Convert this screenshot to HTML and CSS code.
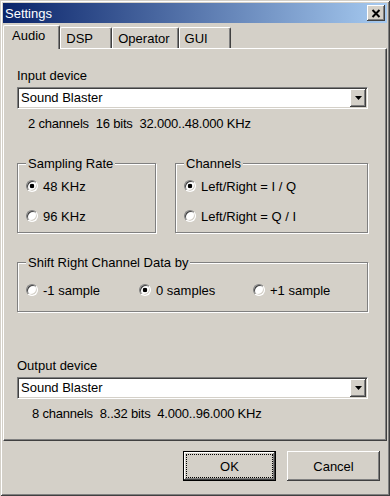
FILE: index.html
```html
<!DOCTYPE html>
<html lang="en">
<head>
  <meta charset="UTF-8">
  <meta name="viewport" content="width=device-width, initial-scale=1.0">
  <title>Settings</title>
  <link rel="stylesheet" href="styles.css">
</head>
<body>
  <div class="window">
    <div class="titlebar">
      <span class="title">Settings</span>
      <button class="close-btn" title="Close">
        <svg width="10" height="9" viewBox="0 0 10 9">
          <path d="M1.5 1L8.5 8M8.5 1L1.5 8" stroke="#000" stroke-width="2" fill="none"/>
        </svg>
      </button>
    </div>

    <div class="tabs">
      <div class="tab active">Audio</div>
      <div class="tab">DSP</div>
      <div class="tab">Operator</div>
      <div class="tab">GUI</div>
    </div>

    <div class="panel">
      <div class="label">Input device</div>
      <div class="combo">
        <span class="combo-text">Sound Blaster</span>
        <span class="combo-btn">
          <svg width="7" height="4" viewBox="0 0 7 4"><path d="M0 0H7L3.5 4Z" fill="#000"/></svg>
        </span>
      </div>
      <div class="info">2 channels&nbsp; 16 bits&nbsp; 32.000..48.000 KHz</div>

      <div class="groups">
        <fieldset class="group group-rate">
          <legend>Sampling Rate</legend>
          <div class="options">
            <div class="option"><span class="radio on"></span>48 KHz</div>
            <div class="option"><span class="radio"></span>96 KHz</div>
          </div>
        </fieldset>

        <fieldset class="group group-channels">
          <legend>Channels</legend>
          <div class="options">
            <div class="option"><span class="radio on"></span>Left/Right = I / Q</div>
            <div class="option"><span class="radio"></span>Left/Right = Q / I</div>
          </div>
        </fieldset>
      </div>

      <fieldset class="group group-shift">
        <legend>Shift Right Channel Data by</legend>
        <div class="options options-row">
          <div class="option"><span class="radio"></span>-1 sample</div>
          <div class="option"><span class="radio on"></span>0 samples</div>
          <div class="option"><span class="radio"></span>+1 sample</div>
        </div>
      </fieldset>

      <div class="label label-out">Output device</div>
      <div class="combo">
        <span class="combo-text">Sound Blaster</span>
        <span class="combo-btn">
          <svg width="7" height="4" viewBox="0 0 7 4"><path d="M0 0H7L3.5 4Z" fill="#000"/></svg>
        </span>
      </div>
      <div class="info info-out">8 channels&nbsp; 8..32 bits&nbsp; 4.000..96.000 KHz</div>
    </div>

    <div class="footer">
      <button class="btn default"><span class="focus">OK</span></button>
      <button class="btn"><span class="focus none">Cancel</span></button>
    </div>
  </div>
</body>
</html>
```

FILE: styles.css
```css
body {
  margin: 0;
  background: #d4d0c8;
  font-family: "Liberation Sans", Arial, sans-serif;
  font-size: 13px;
  line-height: 15px;
  color: #000;
}

.window {
  width: 390px;
  height: 496px;
  box-sizing: border-box;
  padding: 3px;
  display: flex;
  flex-direction: column;
  background: #d4d0c8;
  box-shadow: inset 1px 1px #d4d0c8, inset -1px -1px #404040, inset 2px 2px #fff, inset -2px -2px #808080;
}

/* title bar */
.titlebar {
  flex: none;
  height: 20px;
  display: flex;
  align-items: center;
  justify-content: space-between;
  padding: 0 2px;
  background: linear-gradient(to right, #0a246a, #a6caf0);
  color: #fff;
}

.close-btn {
  width: 18px;
  height: 16px;
  padding: 0;
  border: none;
  display: flex;
  align-items: center;
  justify-content: center;
  background: #d4d0c8;
  box-shadow: inset -1px -1px #404040, inset 1px 1px #fff, inset -2px -2px #808080;
}

/* tabs */
.tabs {
  flex: none;
  height: 25px;
  display: flex;
  align-items: flex-end;
}

.tab {
  box-sizing: border-box;
  min-width: 52px;
  height: 21px;
  padding: 3px 8px 0 5px;
  border: 1px solid #fff;
  border-bottom: none;
  border-right-color: #404040;
  border-radius: 2px 2px 0 0;
  box-shadow: inset -1px 0 #808080;
}

.tab.active {
  position: relative;
  z-index: 1;
  min-width: 57px;
  height: 24px;
  margin-bottom: -1px;
  padding: 2px 14px 0 8px;
  background: #d4d0c8;
}

/* page */
.panel {
  flex: 1;
  padding: 19px 18px 0 13px;
  border: 1px solid #fff;
  border-right-color: #404040;
  border-bottom-color: #404040;
  box-shadow: inset -1px -1px #808080;
}

.label-out {
  margin-top: 46px;
}

.combo {
  box-sizing: border-box;
  height: 22px;
  margin-top: 4px;
  padding: 1px;
  display: flex;
  background: #fff;
  border: 1px solid;
  border-color: #808080 #fff #fff #808080;
  box-shadow: inset 1px 1px #404040, inset -1px -1px #d4d0c8;
}

.combo-text {
  flex: 1;
  padding-left: 2px;
  line-height: 18px;
}

.combo-btn {
  width: 16px;
  display: flex;
  align-items: center;
  justify-content: center;
  background: #d4d0c8;
  box-shadow: inset -1px -1px #404040, inset 1px 1px #fff, inset -2px -2px #808080;
}

.info {
  margin-top: 7px;
  padding-left: 11px;
  letter-spacing: -0.2px;
}

.info-out {
  padding-left: 15px;
}

/* group boxes */
.groups {
  display: flex;
  gap: 19px;
  margin-top: 25px;
}

.group {
  box-sizing: border-box;
  min-width: 0;
  margin: 0;
  padding: 0 8px 8px;
  border: 1px solid #808080;
  box-shadow: 1px 1px 0 #fff, inset 1px 1px 0 #fff;
}

.group legend {
  padding: 0 2px;
  background: #d4d0c8;
}

.group-rate {
  width: 139px;
}

.group-channels {
  flex: 1;
}

.group-shift {
  margin-top: 22px;
  padding-bottom: 13px;
}

.options {
  display: flex;
  flex-direction: column;
  gap: 15px;
  padding-top: 8px;
}

.options-row {
  display: grid;
  grid-template-columns: 113px 114px auto;
  gap: 0;
  padding-top: 13px;
}

.option {
  display: flex;
  align-items: center;
  gap: 5px;
  height: 15px;
  white-space: nowrap;
}

.radio {
  flex: none;
  box-sizing: border-box;
  width: 12px;
  height: 12px;
  margin-top: -1px;
  border-radius: 50%;
  border: 1px solid;
  border-color: #808080 #fff #fff #808080;
  background: #fff;
  box-shadow: inset 1px 1px #404040, inset -1px -1px #d4d0c8;
}

.radio.on {
  background: radial-gradient(circle, #000 2px, #fff 2.6px);
}

/* buttons */
.footer {
  flex: none;
  height: 52px;
  box-sizing: border-box;
  display: flex;
  justify-content: flex-end;
  gap: 11px;
  padding: 10px 7px 0 0;
}

.btn {
  width: 93px;
  height: 30px;
  box-sizing: border-box;
  padding: 3px;
  display: flex;
  font: inherit;
  color: #000;
  background: #d4d0c8;
  border: none;
  box-shadow: inset -1px -1px #404040, inset 1px 1px #fff, inset -2px -2px #808080;
}

.btn.default {
  border: 1px solid #000;
  padding: 2px;
}

.focus {
  flex: 1;
  display: flex;
  align-items: center;
  justify-content: center;
  border: 1px dotted #000;
}

.focus.none {
  border-color: transparent;
}
```
